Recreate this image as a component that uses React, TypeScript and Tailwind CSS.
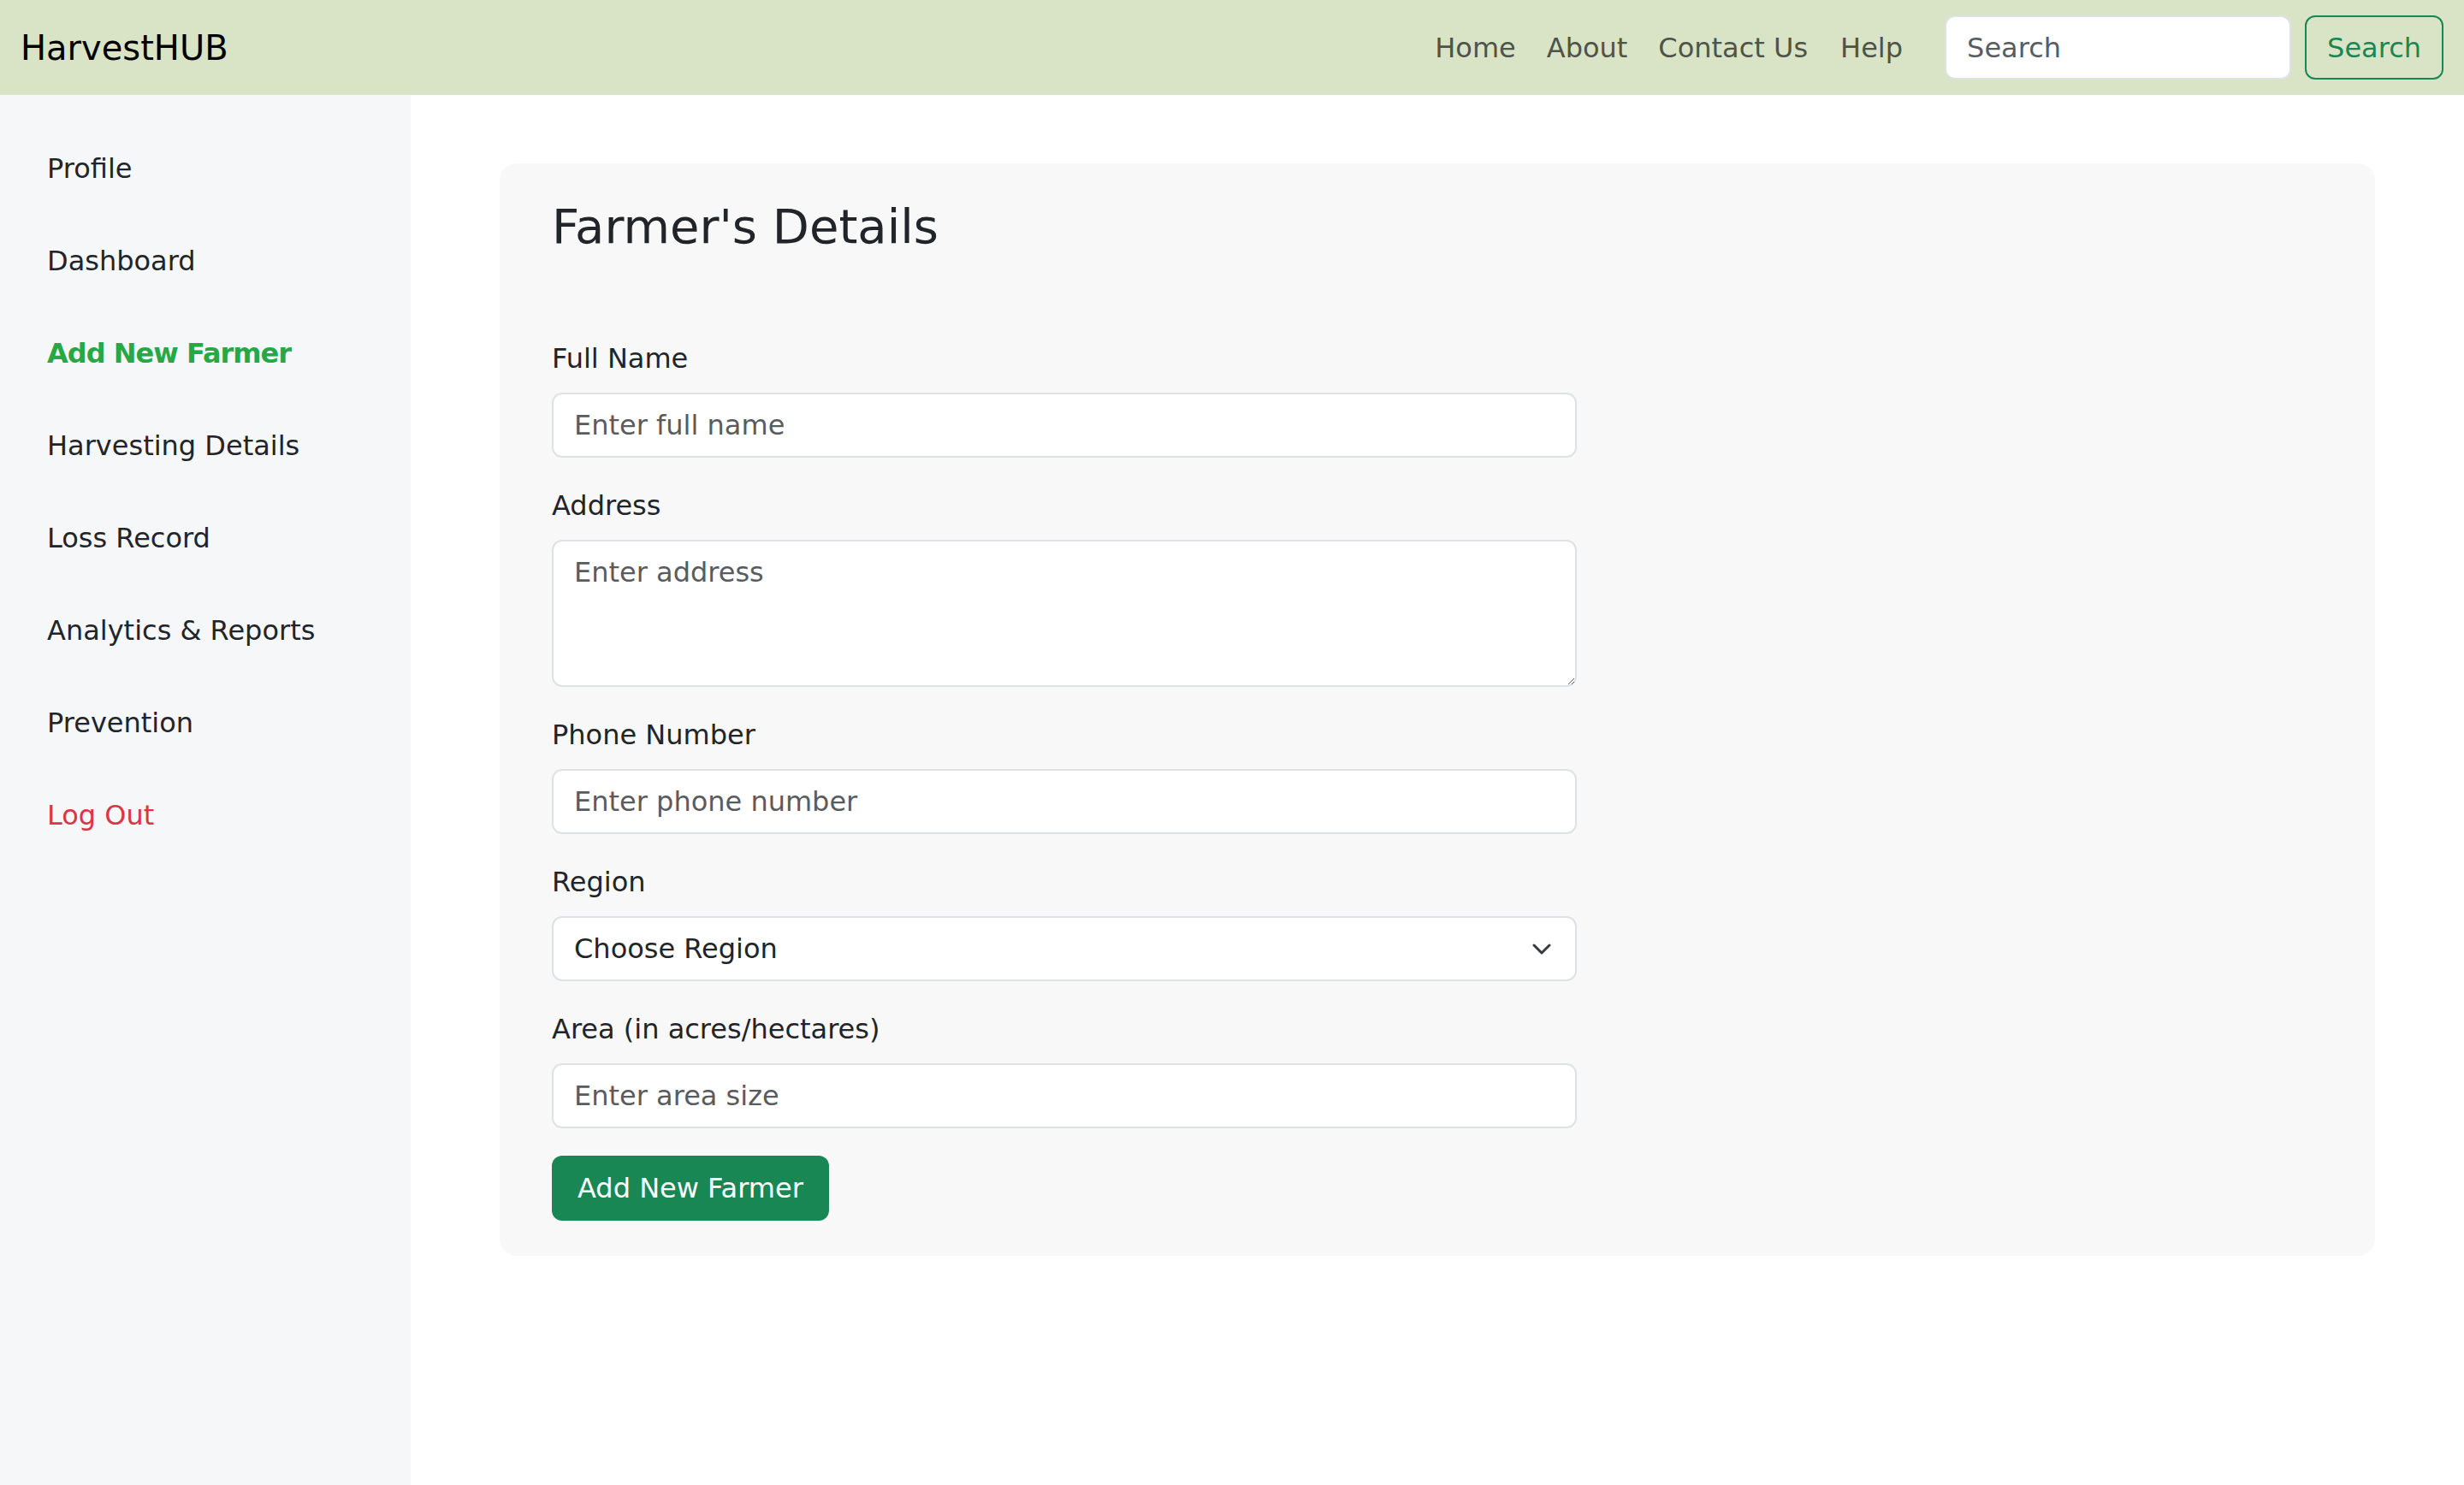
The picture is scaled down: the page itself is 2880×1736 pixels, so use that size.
import React from "react";

const sideItems: { label: string; cls: string }[] = [
  { label: "Profile", cls: "text-[#212529]" },
  { label: "Dashboard", cls: "text-[#212529]" },
  { label: "Add New Farmer", cls: "text-[#28a745] font-bold tracking-[-1px]" },
  { label: "Harvesting Details", cls: "text-[#212529]" },
  { label: "Loss Record", cls: "text-[#212529]" },
  { label: "Analytics & Reports", cls: "text-[#212529]" },
  { label: "Prevention", cls: "text-[#212529]" },
  { label: "Log Out", cls: "text-[#dc3545]" },
];

function Field({ label, children }: { label: string; children: React.ReactNode }) {
  return (
    <div className="mb-[32px]">
      <label className="block mb-[16px] text-[32px] leading-[48px] text-[#212529]">{label}</label>
      {children}
    </div>
  );
}

const inputCls =
  "block w-[1198px] h-[76px] bg-white border-2 border-[#dee2e6] rounded-[12px] px-[24px] text-[32px] leading-[48px] text-[#212529] placeholder:text-[#595c5f] outline-none";

export default function App() {
  return (
    <div className="min-h-screen flex flex-col bg-white font-['DejaVu_Sans',sans-serif]">
      <header className="h-[111px] bg-[#d9e4c6] flex items-center justify-between px-[24px]">
        <div className="text-[40px] leading-[60px] text-black">HarvestHUB</div>
        <div className="flex items-center">
          <nav className="flex items-center text-[32px] leading-[48px] text-[#4f5349]">
            <a className="px-[18px]">Home</a>
            <a className="px-[18px]">About</a>
            <a className="px-[18px]">Contact Us</a>
            <a className="pl-[20px] pr-[18px]">Help</a>
          </nav>
          <div className="ml-[31px] flex items-center">
            <input
              placeholder="Search"
              className="w-[405px] h-[75px] bg-white border-2 border-[#dee2e6] rounded-[12px] px-[24px] text-[32px] text-[#212529] placeholder:text-[#595c5f] outline-none"
            />
            <button className="ml-[16px] h-[75px] px-[24px] border-2 border-[#198754] text-[#198754] rounded-[12px] text-[32px] leading-[48px]">
              Search
            </button>
          </div>
        </div>
      </header>
      <div className="flex flex-1">
        <aside className="w-[480px] bg-[#f6f7f9] pt-[32px]">
          {sideItems.map((it) => (
            <div key={it.label} className={`h-[108px] flex items-center pl-[55px] text-[32px] ${it.cls}`}>
              {it.label}
            </div>
          ))}
        </aside>
        <main className="flex-1 px-[104px] pt-[80px]">
          <div className="bg-[#f8f8f8] rounded-[20px] px-[61px] pt-[35px] pb-[41px]">
            <h2 className="text-[56px] leading-[77px] text-[#212529] font-normal mb-[92px]">Farmer's Details</h2>
            <Field label="Full Name">
              <input className={inputCls} placeholder="Enter full name" />
            </Field>
            <Field label="Address">
              <textarea
                rows={3}
                placeholder="Enter address"
                className="block w-[1198px] h-[172px] bg-white border-2 border-[#dee2e6] rounded-[12px] px-[24px] py-[12px] text-[32px] leading-[48px] text-[#212529] placeholder:text-[#595c5f] outline-none"
              />
            </Field>
            <Field label="Phone Number">
              <input className={inputCls} placeholder="Enter phone number" />
            </Field>
            <Field label="Region">
              <div className="relative w-[1198px]">
                <select className={inputCls + " appearance-none"} defaultValue="">
                  <option value="">Choose Region</option>
                </select>
                <svg
                  className="absolute right-[30px] top-[31px] pointer-events-none"
                  width="22"
                  height="16"
                  viewBox="0 0 22 16"
                  fill="none"
                >
                  <path d="M2 3l9 9 9-9" stroke="#343a40" strokeWidth="3" strokeLinecap="round" strokeLinejoin="round" />
                </svg>
              </div>
            </Field>
            <Field label="Area (in acres/hectares)">
              <input className={inputCls} placeholder="Enter area size" />
            </Field>
            <button className="h-[76px] px-[30px] bg-[#198754] text-white rounded-[12px] text-[32px] leading-[48px]">
              Add New Farmer
            </button>
          </div>
        </main>
      </div>
    </div>
  );
}
